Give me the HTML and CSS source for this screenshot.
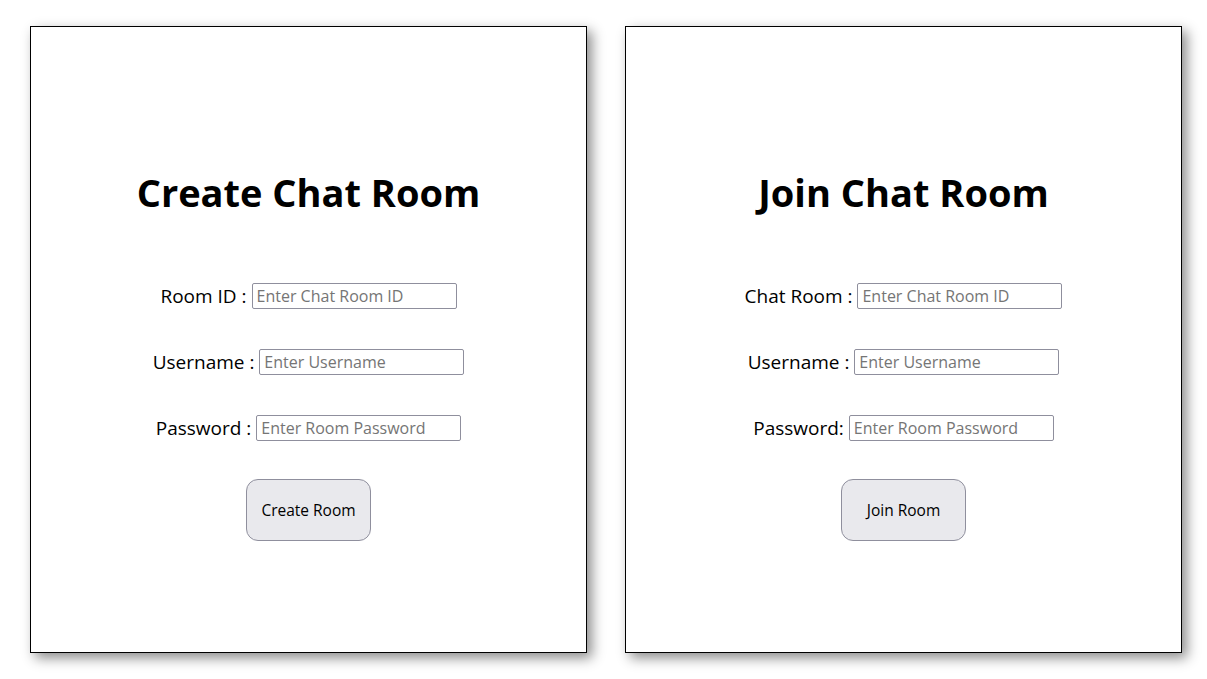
FILE: index.html
```html
<!DOCTYPE html>
<html lang="en">
<head>
<meta charset="utf-8">
<title>Chat Rooms</title>
<link rel="stylesheet" href="styles.css">
</head>
<body>
<main class="page">
  <section class="card">
    <h1 class="title">Create Chat Room</h1>
    <div class="row"><label class="label">Room ID : </label><input class="field" type="text" placeholder="Enter Chat Room ID"></div>
    <div class="row"><label class="label">Username : </label><input class="field" type="text" placeholder="Enter Username"></div>
    <div class="row"><label class="label">Password : </label><input class="field" type="password" placeholder="Enter Room Password"></div>
    <button class="btn" type="button">Create Room</button>
  </section>
  <section class="card">
    <h1 class="title">Join Chat Room</h1>
    <div class="row"><label class="label">Chat Room : </label><input class="field" type="text" placeholder="Enter Chat Room ID"></div>
    <div class="row"><label class="label">Username : </label><input class="field" type="text" placeholder="Enter Username"></div>
    <div class="row"><label class="label">Password: </label><input class="field" type="password" placeholder="Enter Room Password"></div>
    <button class="btn" type="button">Join Room</button>
  </section>
</main>
</body>
</html>
```
FILE: styles.css
```css
* { box-sizing: border-box; }
html, body { margin: 0; padding: 0; background: #fff; }
body { font-family: "Open Sans", "Noto Sans", sans-serif; color: #000; }
.page {
  display: flex;
  gap: 38px;
  padding: 26px 0 26px 30px;
  height: 679px;
}
.card {
  width: 557px;
  height: 627px;
  border: 1px solid #000;
  background: #fff;
  box-shadow: 5px 5px 12px rgba(0,0,0,0.45);
  display: flex;
  flex-direction: column;
  align-items: center;
}
.title {
  margin: 141px 0 0;
  font-size: 38px;
  line-height: 48px;
  font-weight: 700;
}
.row {
  margin-top: 40px;
  height: 26px;
  display: flex;
  align-items: center;
  white-space: pre;
}
.title + .row { margin-top: 67px; }
.label { font-size: 19px; line-height: 26px; }
.field {
  width: 205px;
  height: 26px;
  border: 1px solid #8f8f9d;
  border-radius: 2px;
  padding: 0 4px;
  font-family: inherit;
  font-size: 16px;
  color: #000;
}
.field::placeholder { color: #757575; }
.btn {
  margin-top: 38px;
  width: 125px;
  height: 62px;
  border: 1px solid #8f8f9d;
  border-radius: 12px;
  background: #e9e9ed;
  font-family: inherit;
  font-size: 15.5px;
  color: #000;
}
```
